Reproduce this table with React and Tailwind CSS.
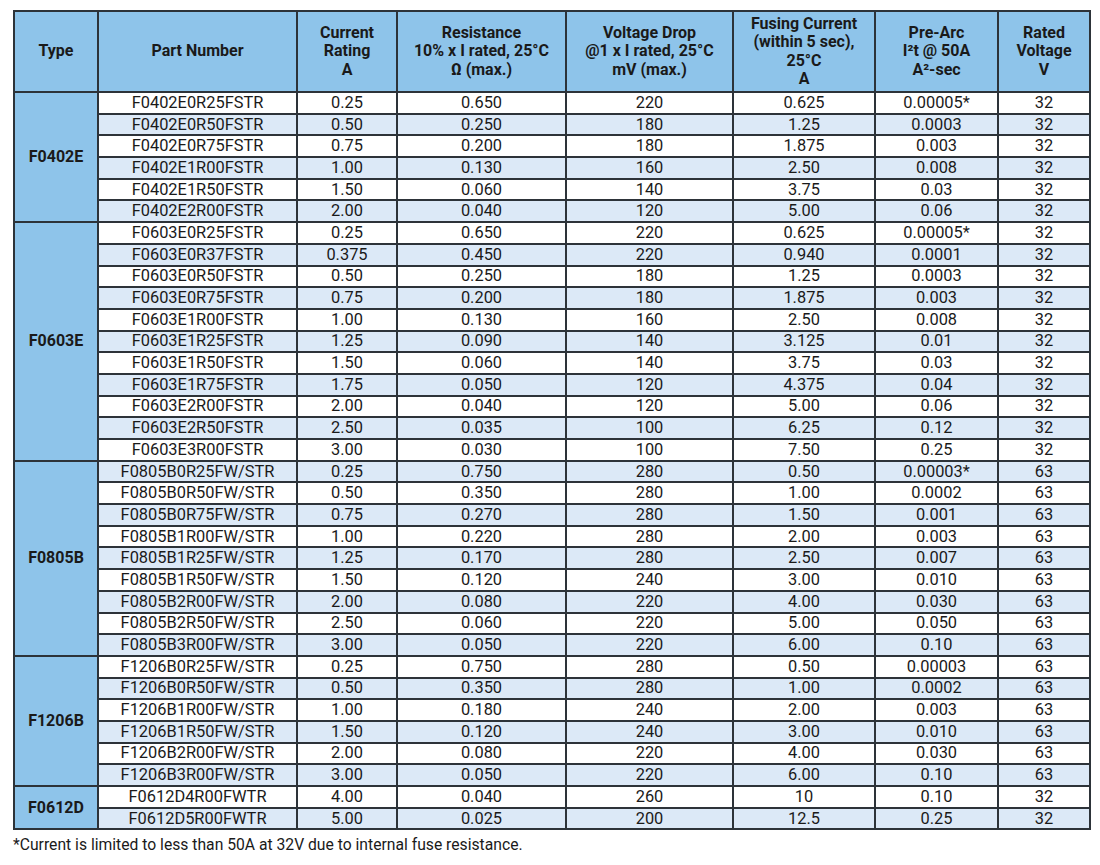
const groups = [
  {
    type: 'F0402E',
    rows: [
      ['F0402E0R25FSTR', '0.25', '0.650', '220', '0.625', '0.00005*', '32'],
      ['F0402E0R50FSTR', '0.50', '0.250', '180', '1.25', '0.0003', '32'],
      ['F0402E0R75FSTR', '0.75', '0.200', '180', '1.875', '0.003', '32'],
      ['F0402E1R00FSTR', '1.00', '0.130', '160', '2.50', '0.008', '32'],
      ['F0402E1R50FSTR', '1.50', '0.060', '140', '3.75', '0.03', '32'],
      ['F0402E2R00FSTR', '2.00', '0.040', '120', '5.00', '0.06', '32'],
    ],
  },
  {
    type: 'F0603E',
    rows: [
      ['F0603E0R25FSTR', '0.25', '0.650', '220', '0.625', '0.00005*', '32'],
      ['F0603E0R37FSTR', '0.375', '0.450', '220', '0.940', '0.0001', '32'],
      ['F0603E0R50FSTR', '0.50', '0.250', '180', '1.25', '0.0003', '32'],
      ['F0603E0R75FSTR', '0.75', '0.200', '180', '1.875', '0.003', '32'],
      ['F0603E1R00FSTR', '1.00', '0.130', '160', '2.50', '0.008', '32'],
      ['F0603E1R25FSTR', '1.25', '0.090', '140', '3.125', '0.01', '32'],
      ['F0603E1R50FSTR', '1.50', '0.060', '140', '3.75', '0.03', '32'],
      ['F0603E1R75FSTR', '1.75', '0.050', '120', '4.375', '0.04', '32'],
      ['F0603E2R00FSTR', '2.00', '0.040', '120', '5.00', '0.06', '32'],
      ['F0603E2R50FSTR', '2.50', '0.035', '100', '6.25', '0.12', '32'],
      ['F0603E3R00FSTR', '3.00', '0.030', '100', '7.50', '0.25', '32'],
    ],
  },
  {
    type: 'F0805B',
    rows: [
      ['F0805B0R25FW/STR', '0.25', '0.750', '280', '0.50', '0.00003*', '63'],
      ['F0805B0R50FW/STR', '0.50', '0.350', '280', '1.00', '0.0002', '63'],
      ['F0805B0R75FW/STR', '0.75', '0.270', '280', '1.50', '0.001', '63'],
      ['F0805B1R00FW/STR', '1.00', '0.220', '280', '2.00', '0.003', '63'],
      ['F0805B1R25FW/STR', '1.25', '0.170', '280', '2.50', '0.007', '63'],
      ['F0805B1R50FW/STR', '1.50', '0.120', '240', '3.00', '0.010', '63'],
      ['F0805B2R00FW/STR', '2.00', '0.080', '220', '4.00', '0.030', '63'],
      ['F0805B2R50FW/STR', '2.50', '0.060', '220', '5.00', '0.050', '63'],
      ['F0805B3R00FW/STR', '3.00', '0.050', '220', '6.00', '0.10', '63'],
    ],
  },
  {
    type: 'F1206B',
    rows: [
      ['F1206B0R25FW/STR', '0.25', '0.750', '280', '0.50', '0.00003', '63'],
      ['F1206B0R50FW/STR', '0.50', '0.350', '280', '1.00', '0.0002', '63'],
      ['F1206B1R00FW/STR', '1.00', '0.180', '240', '2.00', '0.003', '63'],
      ['F1206B1R50FW/STR', '1.50', '0.120', '240', '3.00', '0.010', '63'],
      ['F1206B2R00FW/STR', '2.00', '0.080', '220', '4.00', '0.030', '63'],
      ['F1206B3R00FW/STR', '3.00', '0.050', '220', '6.00', '0.10', '63'],
    ],
  },
  {
    type: 'F0612D',
    rows: [
      ['F0612D4R00FWTR', '4.00', '0.040', '260', '10', '0.10', '32'],
      ['F0612D5R00FWTR', '5.00', '0.025', '200', '12.5', '0.25', '32'],
    ],
  },
]

const headers = [
  ['Type'],
  ['Part Number'],
  ['Current', 'Rating', 'A'],
  ['Resistance', '10% x I rated, 25°C', 'Ω (max.)'],
  ['Voltage Drop', '@1 x I rated, 25°C', 'mV (max.)'],
  ['Fusing Current', '(within 5 sec),', '25°C', 'A'],
  ['Pre-Arc', 'I²t @ 50A', 'A²-sec'],
  ['Rated', 'Voltage', 'V'],
]

const widths = ['w-[84px]', 'w-[199px]', 'w-[100px]', 'w-[169px]', 'w-[167px]', 'w-[142px]', 'w-[123px]', 'w-[92px]']

export default function App() {
  let idx = 0
  return (
    <div className="min-h-[865px] bg-white pt-[10px] pl-[13px] font-['Roboto','Liberation_Sans',sans-serif] text-[#1a1a1a]">
      <table className="w-[1076px] table-fixed border-collapse border-2 border-[#2d3339]">
        <colgroup>
          {widths.map((w, i) => (
            <col key={i} className={w} />
          ))}
        </colgroup>
        <thead>
          <tr className="h-[81px] bg-[#8ec4ea]">
            {headers.map((h, i) => (
              <th key={i} className="border-2 border-[#2d3339] px-0 text-center align-middle text-[16px] font-bold leading-[18.5px]">
                {h.map((line, j) => (
                  <div key={j} className="whitespace-nowrap">{line}</div>
                ))}
              </th>
            ))}
          </tr>
        </thead>
        <tbody>
          {groups.map((g) =>
            g.rows.map((r, ri) => {
              const striped = idx++ % 2 === 1
              return (
                <tr key={r[0]} className={`h-[21.7px] ${striped ? 'bg-[#dce9f7]' : 'bg-white'}`}>
                  {ri === 0 && (
                    <td rowSpan={g.rows.length} className="border-2 border-[#2d3339] bg-[#8ec4ea] text-center align-middle text-[16px] font-bold">
                      {g.type}
                    </td>
                  )}
                  {r.map((c, ci) => (
                    <td key={ci} className="border-2 border-[#2d3339] p-0 text-center align-middle text-[16.4px] leading-[18px]">
                      {c}
                    </td>
                  ))}
                </tr>
              )
            })
          )}
        </tbody>
      </table>
      <p className="mt-[6px] text-[15.7px] leading-[18px]">*Current is limited to less than 50A at 32V due to internal fuse resistance.</p>
    </div>
  )
}
